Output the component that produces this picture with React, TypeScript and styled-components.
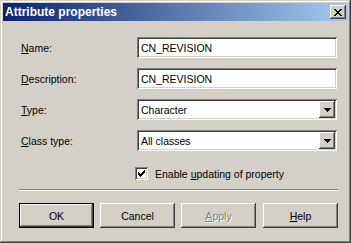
import React from 'react';
import styled, { createGlobalStyle, css } from 'styled-components';

const GlobalStyle = createGlobalStyle`
  html, body {
    margin: 0;
    padding: 0;
    background: #d4d0c8;
  }
  body {
    font-family: "Liberation Sans", Arial, sans-serif;
    font-size: 10.5px;
    color: #000;
  }
`;

const raised = css`
  background: #d4d0c8;
  box-shadow: inset -1px -1px #404040, inset 1px 1px #ffffff,
    inset -2px -2px #808080, inset 2px 2px #d4d0c8;
`;

const sunken = css`
  background: #ffffff;
  box-shadow: inset 1px 1px #808080, inset -1px -1px #ffffff,
    inset 2px 2px #404040, inset -2px -2px #d4d0c8;
`;

const Window = styled.div`
  width: 351px;
  height: 243px;
  box-sizing: border-box;
  padding: 3px;
  display: flex;
  flex-direction: column;
  background: #d4d0c8;
  box-shadow: inset -1px -1px #404040, inset 1px 1px #d4d0c8,
    inset -2px -2px #808080, inset 2px 2px #ffffff;
`;

const TitleBar = styled.div`
  height: 18px;
  display: flex;
  align-items: center;
  justify-content: space-between;
  padding: 0 2px 0 2px;
  background: linear-gradient(to right, #0a246a, #a6caf0);
`;

const Title = styled.span`
  color: #ffffff;
  font-family: "Liberation Sans", Arial, sans-serif;
  font-weight: bold;
  font-size: 12px;
`;

const CloseButton = styled.div`
  ${raised};
  width: 16px;
  height: 14px;
  display: flex;
  align-items: center;
  justify-content: center;
`;

const Body = styled.div`
  flex: 1;
  padding: 16px 10px 0 16px;
  display: flex;
  flex-direction: column;
`;

const FormGrid = styled.div`
  display: grid;
  grid-template-columns: 118px 200px;
  grid-auto-rows: 21px;
  row-gap: 10px;
  align-items: center;
`;

const Label = styled.label`
  padding-left: 2px;
`;

const TextBox = styled.div`
  ${sunken};
  height: 21px;
  box-sizing: border-box;
  padding: 0 4px;
  display: flex;
  align-items: center;
`;

const Combo = styled.div`
  ${sunken};
  height: 21px;
  box-sizing: border-box;
  padding: 2px 2px 2px 4px;
  display: flex;
  align-items: center;
  justify-content: space-between;
`;

const DropButton = styled.div`
  ${raised};
  width: 16px;
  height: 17px;
  display: flex;
  align-items: center;
  justify-content: center;
`;

const CheckRow = styled.div`
  margin-top: 16px;
  margin-left: 116px;
  height: 13px;
  display: flex;
  align-items: center;
  gap: 7px;
`;

const CheckBox = styled.div`
  ${sunken};
  width: 13px;
  height: 13px;
  display: flex;
  align-items: center;
  justify-content: center;
`;

const Separator = styled.div`
  margin-top: 9px;
  width: 319px;
  height: 1px;
  background: #808080;
  border-bottom: 1px solid #ffffff;
`;

const ButtonRow = styled.div`
  margin-top: 12px;
  display: flex;
  gap: 6px;
`;

const Button = styled.div<{ $default?: boolean; $disabled?: boolean; $gapLeft?: number }>`
  width: 75px;
  height: 25px;
  box-sizing: border-box;
  display: flex;
  align-items: center;
  justify-content: center;
  margin-left: ${(p) => p.$gapLeft ?? 0}px;
  ${(p) =>
    p.$default
      ? css`
          background: #d4d0c8;
          box-shadow: inset 0 0 0 1px #000000, inset -2px -2px #404040,
            inset 2px 2px #ffffff, inset -3px -3px #808080;
        `
      : raised};
  ${(p) =>
    p.$disabled &&
    css`
      color: #808080;
      text-shadow: 1px 1px #ffffff;
    `}
`;

const Underline = styled.u`
  text-decoration: underline;
`;

const ArrowDown = () => (
  <svg width="7" height="4" viewBox="0 0 7 4" shapeRendering="crispEdges">
    <path d="M0 0h7v1H0zM1 1h5v1H1zM2 2h3v1H2zM3 3h1v1H3z" fill="#000" />
  </svg>
);

const CloseGlyph = () => (
  <svg width="8" height="7" viewBox="0 0 8 7" shapeRendering="crispEdges">
    <path
      d="M0 0h2v1H0zM6 0h2v1H6zM1 1h2v1H1zM5 1h2v1H5zM2 2h4v1H2zM3 3h2v1H3zM2 4h4v1H2zM1 5h2v1H1zM5 5h2v1H5zM0 6h2v1H0zM6 6h2v1H6z"
      fill="#000"
    />
  </svg>
);

const CheckGlyph = () => (
  <svg width="7" height="7" viewBox="0 0 7 7" shapeRendering="crispEdges">
    <path
      d="M6 0h1v3H6zM5 1h1v3H5zM4 2h1v3H4zM3 3h1v3H3zM2 4h1v3H2zM1 3h1v3H1zM0 2h1v3H0z"
      fill="#000"
    />
  </svg>
);

export default function App() {
  return (
    <>
      <GlobalStyle />
      <Window>
        <TitleBar>
          <Title>Attribute properties</Title>
          <CloseButton>
            <CloseGlyph />
          </CloseButton>
        </TitleBar>
        <Body>
          <FormGrid>
            <Label>
              <Underline>N</Underline>ame:
            </Label>
            <TextBox>CN_REVISION</TextBox>
            <Label>
              <Underline>D</Underline>escription:
            </Label>
            <TextBox>CN_REVISION</TextBox>
            <Label>
              <Underline>T</Underline>ype:
            </Label>
            <Combo>
              <span>Character</span>
              <DropButton>
                <ArrowDown />
              </DropButton>
            </Combo>
            <Label>
              <Underline>C</Underline>lass type:
            </Label>
            <Combo>
              <span>All classes</span>
              <DropButton>
                <ArrowDown />
              </DropButton>
            </Combo>
          </FormGrid>
          <CheckRow>
            <CheckBox>
              <CheckGlyph />
            </CheckBox>
            <span>
              Enable <Underline>u</Underline>pdating of property
            </span>
          </CheckRow>
          <Separator />
          <ButtonRow>
            <Button $default>OK</Button>
            <Button>Cancel</Button>
            <Button $disabled>
              <span>
                <Underline>A</Underline>pply
              </span>
            </Button>
            <Button $gapLeft={1}>
              <span>
                <Underline>H</Underline>elp
              </span>
            </Button>
          </ButtonRow>
        </Body>
      </Window>
    </>
  );
}
